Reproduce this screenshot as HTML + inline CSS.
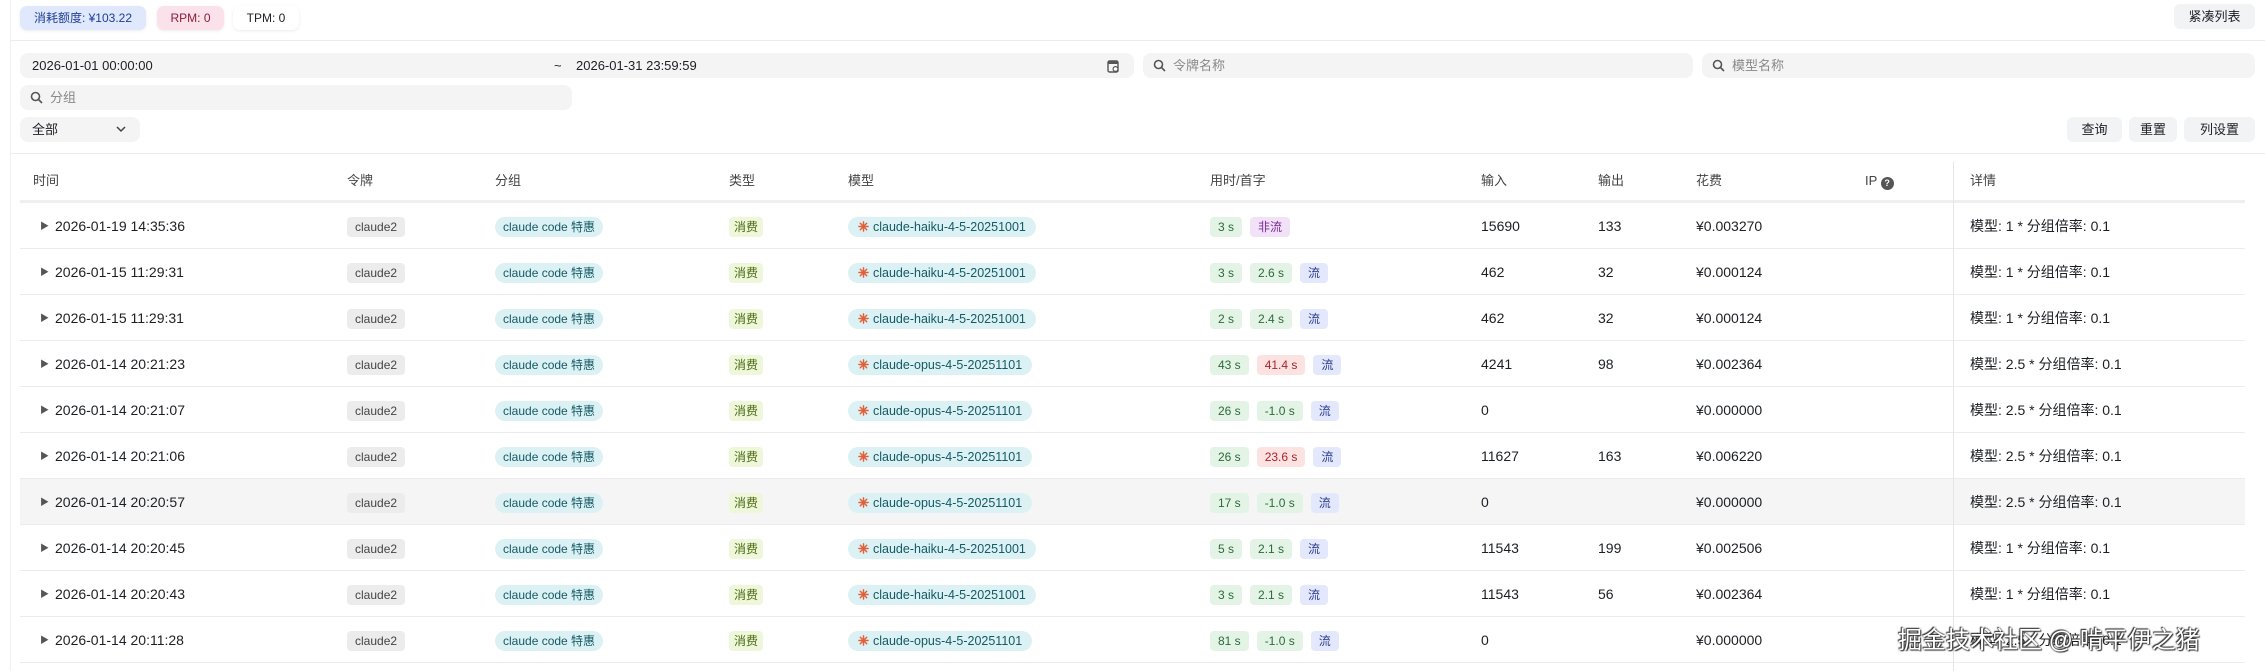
<!DOCTYPE html>
<html><head><meta charset="utf-8"><style>
*{box-sizing:border-box;margin:0;padding:0}
body{width:2265px;height:671px;overflow:hidden;background:#fff;font-family:"Liberation Sans","Noto Sans CJK SC",sans-serif;color:#1c1f23;font-size:14px;position:relative}
.abs{position:absolute}
.badge{position:absolute;top:6px;height:24px;border-radius:7px;font-size:12px;line-height:24px;text-align:center;box-shadow:0 1px 3px rgba(0,0,0,.08)}
.inp{position:absolute;height:25px;background:#f4f4f5;border-radius:8px;font-size:13px;line-height:25px;color:#1c1f23}
.ph{color:#888}
.btn{position:absolute;top:117px;height:25px;background:#f2f3f5;border-radius:6px;font-size:13px;line-height:25px;text-align:center;color:#1c1f23}
.hline{position:absolute;left:20px;right:20px;height:1px;background:#ececee}
.th{position:absolute;top:172px;font-size:13px;color:#444;line-height:18px}
.row{position:absolute;left:20px;right:20px;height:46px;border-bottom:1px solid #ececee}
.c{position:absolute;top:0;height:46px;line-height:46px;font-size:14px;white-space:nowrap}
.tag{display:inline-block;height:20px;line-height:20px;font-size:12px;padding:0 8px;border-radius:4px;vertical-align:middle}
.pill{border-radius:10px}
.g{background:#e3f4e6;color:#2d6a3a}.r{background:#fde2e2;color:#a8262b}.b{background:#e3e8fd;color:#2c3f8c}.p{background:#f1e2f8;color:#7a2a96}
.q{width:13px;height:13px;border-radius:7px;background:#555;color:#fff;font-size:9px;line-height:13px;text-align:center;display:inline-block;vertical-align:-1px;font-weight:bold}
</style></head><body>
<div class="abs" style="left:10px;top:0;width:1px;height:671px;background:#f0f0f0"></div>
<div class="badge" style="left:20px;width:126px;background:#dfe8fc;color:#1e3f96">消耗额度: ¥103.22</div>
<div class="badge" style="left:157px;width:67px;background:#fbe2ea;color:#8c1c3c">RPM: 0</div>
<div class="badge" style="left:233px;width:66px;background:#fff;color:#1c1f23">TPM: 0</div>
<div class="btn" style="top:4px;left:2174px;width:81px">紧凑列表</div>
<div class="hline" style="top:40px;left:10px;right:0"></div>
<div class="inp" style="left:20px;top:53px;width:1114px"><span class="abs" style="left:12px">2026-01-01 00:00:00</span><span class="abs" style="left:534px">~</span><span class="abs" style="left:556px">2026-01-31 23:59:59</span>
<svg class="abs" style="left:1086px;top:6px" width="14" height="14" viewBox="0 0 14 14"><rect x="2" y="2" width="10" height="11" rx="1.5" fill="none" stroke="#555" stroke-width="1.4"/><rect x="2" y="2" width="10" height="3" fill="#555"/><circle cx="9.5" cy="10" r="2.4" fill="#fff" stroke="#555" stroke-width="1.2"/></svg></div>
<div class="inp" style="left:1143px;top:53px;width:550px"><svg class="abs" style="left:10px;top:6px" width="13" height="13" viewBox="0 0 13 13"><circle cx="5.5" cy="5.5" r="4" fill="none" stroke="#555" stroke-width="1.6"/><path d="M8.5 8.5L12 12" stroke="#555" stroke-width="1.6"/></svg><span class="abs ph" style="left:30px">令牌名称</span></div>
<div class="inp" style="left:1702px;top:53px;width:553px"><svg class="abs" style="left:10px;top:6px" width="13" height="13" viewBox="0 0 13 13"><circle cx="5.5" cy="5.5" r="4" fill="none" stroke="#555" stroke-width="1.6"/><path d="M8.5 8.5L12 12" stroke="#555" stroke-width="1.6"/></svg><span class="abs ph" style="left:30px">模型名称</span></div>
<div class="inp" style="left:20px;top:85px;width:552px"><svg class="abs" style="left:10px;top:6px" width="13" height="13" viewBox="0 0 13 13"><circle cx="5.5" cy="5.5" r="4" fill="none" stroke="#555" stroke-width="1.6"/><path d="M8.5 8.5L12 12" stroke="#555" stroke-width="1.6"/></svg><span class="abs ph" style="left:30px">分组</span></div>
<div class="inp" style="left:20px;top:117px;width:120px"><span class="abs" style="left:12px">全部</span><svg class="abs" style="left:96px;top:9px" width="10" height="7" viewBox="0 0 10 7"><path d="M1 1l4 4 4-4" fill="none" stroke="#444" stroke-width="1.5"/></svg></div>
<div class="btn" style="left:2067px;width:55px">查询</div>
<div class="btn" style="left:2129px;width:48px">重置</div>
<div class="btn" style="left:2184px;width:71px">列设置</div>
<div class="hline" style="top:153px;left:10px;right:0"></div>
<div class="th" style="left:33px">时间</div><div class="th" style="left:347px">令牌</div><div class="th" style="left:495px">分组</div><div class="th" style="left:729px">类型</div><div class="th" style="left:848px">模型</div><div class="th" style="left:1210px">用时/首字</div><div class="th" style="left:1481px">输入</div><div class="th" style="left:1598px">输出</div><div class="th" style="left:1696px">花费</div><div class="th" style="left:1865px">IP <span class="q">?</span></div><div class="th" style="left:1970px">详情</div>
<div class="hline" style="top:200px;height:3px;background:#eeeff1"></div>
<div id="rows"></div>
<div class="abs" style="left:1953px;top:162px;width:1px;height:509px;background:#e6e6e8"></div>
<div class="abs" style="left:1898px;top:620px;font-size:24px;color:#fff;white-space:nowrap;text-shadow:0 0 2px #333,1px 1px 1px #333,-1px -1px 1px #333">掘金技术社区 @ 啃平伊之猪</div>
<script>
var d=[
["2026-01-19 14:35:36","haiku-4-5-20251001","3 s","","非流","15690","133","¥0.003270","1"],
["2026-01-15 11:29:31","haiku-4-5-20251001","3 s","2.6 s","流","462","32","¥0.000124","1"],
["2026-01-15 11:29:31","haiku-4-5-20251001","2 s","2.4 s","流","462","32","¥0.000124","1"],
["2026-01-14 20:21:23","opus-4-5-20251101","43 s","41.4 s","流","4241","98","¥0.002364","2.5"],
["2026-01-14 20:21:07","opus-4-5-20251101","26 s","-1.0 s","流","0","","¥0.000000","2.5"],
["2026-01-14 20:21:06","opus-4-5-20251101","26 s","23.6 s","流","11627","163","¥0.006220","2.5"],
["2026-01-14 20:20:57","opus-4-5-20251101","17 s","-1.0 s","流","0","","¥0.000000","2.5"],
["2026-01-14 20:20:45","haiku-4-5-20251001","5 s","2.1 s","流","11543","199","¥0.002506","1"],
["2026-01-14 20:20:43","haiku-4-5-20251001","3 s","2.1 s","流","11543","56","¥0.002364","1"],
["2026-01-14 20:11:28","opus-4-5-20251101","81 s","-1.0 s","流","0","","¥0.000000","2.5"]];
var h="";
var star='<svg width="11" height="11" viewBox="0 0 12 12" style="vertical-align:-1px;margin-right:4px"><g stroke="#e0603a" stroke-width="1.6" stroke-linecap="round"><path d="M6 1v10M1 6h10M2.5 2.5l7 7M9.5 2.5l-7 7"/></g></svg>';
d.forEach(function(r,i){
var top=203+i*46;
var ft=r[3]?'<span class="tag '+(parseFloat(r[3])>20?'r':'g')+'" style="margin-left:8px">'+r[3]+'</span>':'';
var st='<span class="tag '+(r[4]=="流"?'b':'p')+'" style="margin-left:8px">'+r[4]+'</span>';
h+='<div class="row" style="top:'+top+'px;'+(i==6?'background:#f5f5f6;':'')+'">'+
'<div class="c" style="left:20px;font-size:9px;color:#555">&#9654;</div>'+
'<div class="c" style="left:35px">'+r[0]+'</div>'+
'<div class="c" style="left:327px"><span class="tag" style="background:#ececec;color:#444">claude2</span></div>'+
'<div class="c" style="left:475px"><span class="tag pill" style="background:#dcf1f3;color:#145a66">claude code 特惠</span></div>'+
'<div class="c" style="left:709px"><span class="tag" style="background:#eef7d9;color:#4b6a12;padding:0 5px">消费</span></div>'+
'<div class="c" style="left:828px"><span class="tag pill" style="background:#dcf1f3;color:#145a66;font-size:12.5px;padding:0 10px">'+star+'claude-'+r[1]+'</span></div>'+
'<div class="c" style="left:1190px"><span class="tag g">'+r[2]+'</span>'+ft+st+'</div>'+
'<div class="c" style="left:1461px">'+r[5]+'</div>'+
'<div class="c" style="left:1578px">'+r[6]+'</div>'+
'<div class="c" style="left:1676px">'+r[7]+'</div>'+
'<div class="c" style="left:1950px">模型: '+r[8]+' * 分组倍率: 0.1</div></div>';
});
document.getElementById("rows").innerHTML=h;
</script>
</body></html>
